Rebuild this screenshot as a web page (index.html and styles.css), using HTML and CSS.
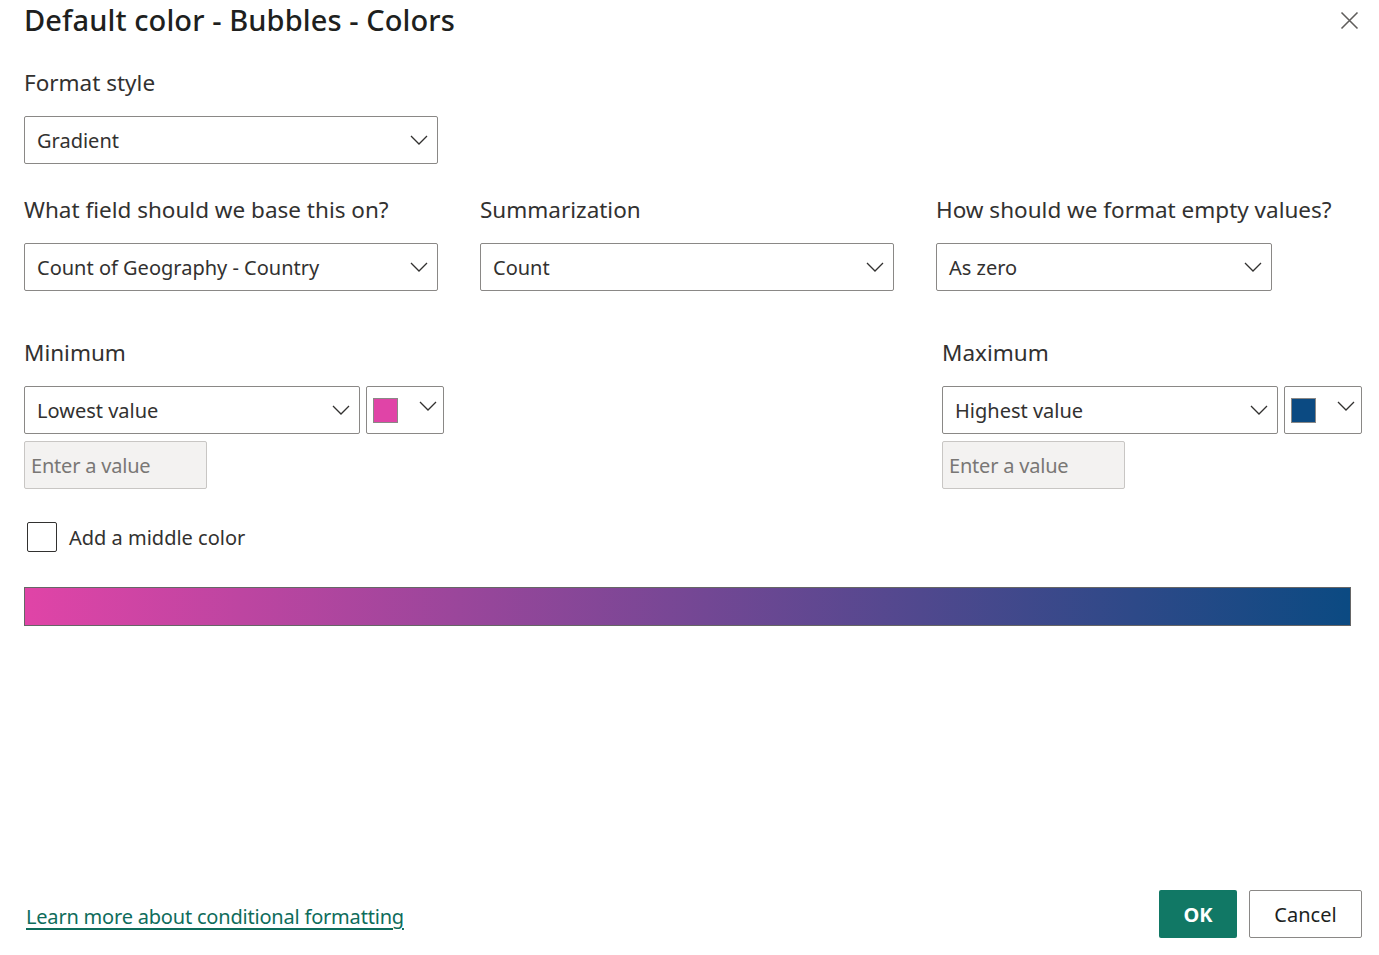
FILE: index.html
```html
<!DOCTYPE html>
<html>
<head>
<meta charset="utf-8">
<link rel="stylesheet" href="styles.css">
</head>
<body>
<div class="dialog">
  <header class="head">
    <h1 class="title">Default color - Bubbles - Colors</h1>
    <button class="close" aria-label="Close">
      <svg width="19" height="19" viewBox="0 0 19 19"><path d="M1.5 1.5 L17.5 17.5 M17.5 1.5 L1.5 17.5" stroke="#605e5c" stroke-width="1.6" fill="none"/></svg>
    </button>
  </header>

  <div class="field fmt">
    <div class="label">Format style</div>
    <div class="select w414"><span>Gradient</span><svg class="chev" width="18" height="10" viewBox="0 0 18 10"><path d="M1 1 L9 9 L17 1" stroke="#323130" stroke-width="1.3" fill="none"/></svg></div>
  </div>

  <div class="row3">
    <div class="field">
      <div class="label">What field should we base this on?</div>
      <div class="select w414"><span>Count of Geography - Country</span><svg class="chev" width="18" height="10" viewBox="0 0 18 10"><path d="M1 1 L9 9 L17 1" stroke="#323130" stroke-width="1.3" fill="none"/></svg></div>
    </div>
    <div class="field">
      <div class="label">Summarization</div>
      <div class="select w414"><span>Count</span><svg class="chev" width="18" height="10" viewBox="0 0 18 10"><path d="M1 1 L9 9 L17 1" stroke="#323130" stroke-width="1.3" fill="none"/></svg></div>
    </div>
    <div class="field">
      <div class="label">How should we format empty values?</div>
      <div class="select w336"><span>As zero</span><svg class="chev" width="18" height="10" viewBox="0 0 18 10"><path d="M1 1 L9 9 L17 1" stroke="#323130" stroke-width="1.3" fill="none"/></svg></div>
    </div>
  </div>

  <div class="minmax">
    <div class="mm">
      <div class="label">Minimum</div>
      <div class="pair">
        <div class="select w336"><span>Lowest value</span><svg class="chev" width="18" height="10" viewBox="0 0 18 10"><path d="M1 1 L9 9 L17 1" stroke="#323130" stroke-width="1.3" fill="none"/></svg></div>
        <div class="color"><span class="swatch pink"></span><svg class="chev up" width="18" height="10" viewBox="0 0 18 10"><path d="M1 1 L9 9 L17 1" stroke="#323130" stroke-width="1.3" fill="none"/></svg></div>
      </div>
      <div class="input">Enter a value</div>
    </div>
    <div class="mm">
      <div class="label">Maximum</div>
      <div class="pair">
        <div class="select w336"><span>Highest value</span><svg class="chev" width="18" height="10" viewBox="0 0 18 10"><path d="M1 1 L9 9 L17 1" stroke="#323130" stroke-width="1.3" fill="none"/></svg></div>
        <div class="color"><span class="swatch blue"></span><svg class="chev up" width="18" height="10" viewBox="0 0 18 10"><path d="M1 1 L9 9 L17 1" stroke="#323130" stroke-width="1.3" fill="none"/></svg></div>
      </div>
      <div class="input">Enter a value</div>
    </div>
  </div>

  <label class="check"><span class="box"></span><span>Add a middle color</span></label>

  <div class="gradient"></div>

  <footer class="foot">
    <a class="link" href="#">Learn more about conditional formatting</a>
    <div class="btns">
      <button class="ok">OK</button>
      <button class="cancel">Cancel</button>
    </div>
  </footer>
</div>
</body>
</html>
```
FILE: styles.css
```css
* { box-sizing: border-box; }
html, body { margin: 0; padding: 0; background: #fff; }
body {
  font-family: "Noto Sans", "Open Sans", sans-serif;
  color: #323130;
  width: 1379px;
  height: 955px;
  overflow: hidden;
}
.dialog {
  padding: 0 17px 0 24px;
  height: 955px;
  display: flex;
  flex-direction: column;
}
.head {
  display: flex;
  justify-content: space-between;
  align-items: flex-start;
  height: 44px;
}
.title {
  margin: 0;
  font-size: 29px;
  font-weight: 500;
  color: #201f1e;
  line-height: 40px;
  letter-spacing: 0.1px;
}
.close {
  border: 0;
  background: none;
  padding: 0;
  margin: 11px 3px 0 0;
  width: 19px;
  height: 19px;
}
.label {
  font-size: 22.5px;
  line-height: 28px;
  color: #323130;
}
.field .label { margin-bottom: 19px; }
.fmt { margin-top: 25px; }
.select {
  height: 48px;
  border: 1px solid #8a8886;
  border-radius: 2px;
  display: flex;
  align-items: center;
  justify-content: space-between;
  padding: 0 9px 0 12px;
  font-size: 20px;
  color: #323130;
}
.w414 { width: 414px; }
.w336 { width: 336px; }
.row3 {
  display: flex;
  gap: 42px;
  margin-top: 32px;
}
.minmax {
  display: flex;
  justify-content: space-between;
  margin-top: 48px;
}
.mm .label { margin-bottom: 19px; }
.pair { display: flex; gap: 6px; }
.color {
  width: 78px;
  height: 48px;
  border: 1px solid #8a8886;
  border-radius: 2px;
  display: flex;
  justify-content: space-between;
  padding: 11px 6px 0 6px;
}
.swatch {
  width: 25px;
  height: 25px;
  border: 1px solid #8a8886;
}
.pink { background: #e044a7; }
.blue { background: #0b4a82; }
.chev.up { margin-top: 3px; }
.input {
  margin-top: 7px;
  width: 183px;
  height: 48px;
  border: 1px solid #c8c6c4;
  border-radius: 2px;
  background: #f3f2f1;
  color: #797775;
  font-size: 20px;
  letter-spacing: -0.2px;
  padding: 0 6px;
  display: flex;
  align-items: center;
}
.check {
  display: flex;
  align-items: center;
  gap: 12px;
  margin: 33px 0 0 3px;
  font-size: 20px;
  color: #323130;
}
.box {
  width: 30px;
  height: 30px;
  border: 1px solid #323130;
  border-radius: 2px;
}
.gradient {
  margin-top: 35px;
  width: 1327px;
  height: 39px;
  border: 1px solid #666;
  background: linear-gradient(to right, #e044a7, #0b4a82);
}
.foot {
  margin-top: auto;
  margin-bottom: 17px;
  display: flex;
  justify-content: space-between;
  align-items: flex-end;
}
.link {
  font-size: 20px;
  color: #0e6c5b;
  letter-spacing: -0.2px;
  margin: 0 0 8px 2px;
  text-decoration: underline;
  text-underline-offset: 4px;
}
.btns { display: flex; gap: 12px; }
.ok, .cancel {
  height: 48px;
  font-family: inherit;
  font-size: 20px;
  border-radius: 2px;
}
.ok {
  width: 78px;
  background: #117865;
  color: #fff;
  border: 0;
  font-weight: 700;
}
.cancel {
  width: 113px;
  background: #fff;
  color: #201f1e;
  border: 1px solid #8a8886;
  font-weight: 400;
}
```
